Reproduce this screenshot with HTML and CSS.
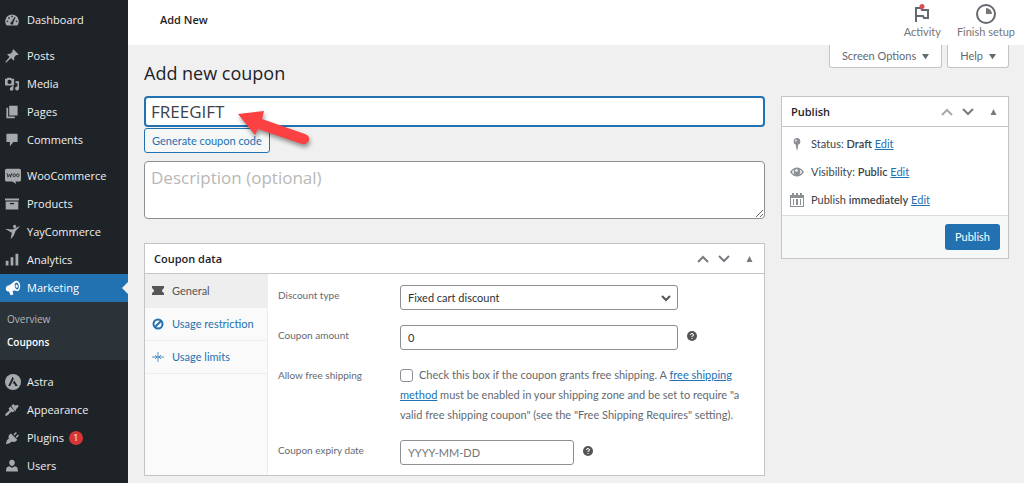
FILE: index.html
```html
<!DOCTYPE html>
<html lang="en">
<head>
<meta charset="utf-8">
<meta name="viewport" content="width=device-width, initial-scale=1">
<title>Add new coupon</title>
<link rel="stylesheet" href="styles.css">
</head>
<body>
<div class="admin">
  <nav class="sidebar" aria-label="Main menu">
    <ul class="menu">
      <li class="group"><a class="item" href="#"><svg class="icon" viewBox="0 0 20 20"><path fill-rule="evenodd" d="M2.500 18h15a9.700 9.700 0 1 0-15 0zM9 4h2v2H9zM4.500 6.200h2v2h-2zM2.500 11h2v2h-2zM15.500 11h2v2h-2zM14 5.500l1 .8-3.300 7.700a2 2 0 1 1-2.500-1.200z"/></svg>Dashboard</a></li>
      <li><a class="item" href="#"><svg class="icon" viewBox="0 0 20 20"><path d="M12 .5 19.500 8l-2 1-1.500-.3-3 3.300c.6 1.800.2 3.400-.8 4.600l-3.600-3.600L1.500 19.500l-1-1 6-7.500L3 7.800c1.400-1.200 3-1.400 4.500-1l3.300-2.900-.2-1.600z"/></svg>Posts</a></li>
      <li><a class="item" href="#"><svg class="icon" viewBox="0 0 20 20"><path fill-rule="evenodd" d="M0 2.500h2.500L3.500 1h5l1 1.500H13V12H0zM6.500 4a3 3 0 1 0 0 6 3 3 0 0 0 0-6zM15 6h5v10.500a2.800 2.800 0 1 1-2.200-2.800V9H15zM12 13v4a2.600 2.600 0 1 1-2.200-2.600V13z"/></svg>Media</a></li>
      <li><a class="item" href="#"><svg class="icon" viewBox="0 0 20 20"><path d="M6 1h12v14H6zM2 4h2.500v12.500H14V19H2z"/></svg>Pages</a></li>
      <li class="group"><a class="item" href="#"><svg class="icon" viewBox="0 0 20 20"><path d="M3 1h14q1 0 1 1v10q0 1-1 1h-5l-5 6v-6H3q-1 0-1-1V2q0-1 1-1z"/></svg>Comments</a></li>
      <li><a class="item" href="#"><svg class="icon icon-wide" viewBox="0 0 20 20"><path d="M2 1h16q2 0 2 2v12q0 2-2 2h-5l1 3-5-3H2q-2 0-2-2V3q0-2 2-2z"/><path class="cut-line" d="M2.500 6.500l1.200 5 2-4 1.300 4 1.500-5"/><circle class="cut-line" cx="11.500" cy="9" r="1.700"/><circle class="cut-line" cx="16" cy="9" r="1.700"/></svg>WooCommerce</a></li>
      <li><a class="item" href="#"><svg class="icon" viewBox="0 0 20 20"><path fill-rule="evenodd" d="M0 2h20v3H0zM1 6.500h18V18H1zM7 8.500v2h6v-2z"/></svg>Products</a></li>
      <li><a class="item" href="#"><svg class="icon icon-wide" viewBox="0 0 20 20"><circle cx="12" cy="3" r="2"/><path d="M0 6l9 1 10-4.500-6 6.500c-1 4-3 7.500-6 10l1.500-8z"/></svg>YayCommerce</a></li>
      <li><a class="item" href="#"><svg class="icon" viewBox="0 0 20 20"><path d="M1 11h4v7H1zM8 6h4v12H8zM15 1h4v17h-4z"/></svg>Analytics</a></li>
      <li class="group">
        <a class="item item-current" href="#"><svg class="icon icon-wide" viewBox="0 0 20 20"><path fill-rule="evenodd" d="M14 1c3 0 5 3 5 6.500S17.500 14 15.500 14c-1.500 0-3-.9-4.500-.7l-1.500.4 1 4.300-3.500 1-2-4.700C2.500 15 1 13 1 11s1-3.500 3-4c4-.8 6.500-5.500 10-6zM14.500 3c-1.500 0-2.500 2-2.500 4s1.500 5 3 5 2.300-2 2.300-4.300S16 3 14.500 3zM14 5.500c1.200 0 2 1 2 2.200s-.5 2-1.300 2-1.500-1-1.500-2.200.3-2 .8-2z"/></svg>Marketing</a>
        <ul class="submenu">
          <li><a class="subitem" href="#">Overview</a></li>
          <li><a class="subitem subitem-current" href="#">Coupons</a></li>
        </ul>
      </li>
      <li><a class="item" href="#"><svg class="icon icon-wide" viewBox="0 0 20 20"><circle cx="10" cy="10" r="10"/><path class="cut" d="M9.500 3.500 4 15h2.500l4.500-9zM11.500 8l-2 4h2l1.300 3H16z"/></svg>Astra</a></li>
      <li><a class="item" href="#"><svg class="icon" viewBox="0 0 20 20"><path d="M9 4l3-2.500 2 2L18.500 3l1 1.500-3.500 4.500-1.500 3zM8 5l5.500 6.500-2.500 2-1.500-1.500c-2 .5-4 4.500-6.500 6S-.5 17.500 1 15.500s5-4 5.500-5.500L5 8z"/></svg>Appearance</a></li>
      <li><a class="item" href="#"><svg class="icon" viewBox="0 0 20 20"><path d="M12 5l3.500-3.500 1.500 1.500L13.500 6.500zM15 8.500 18.500 5 20 6.500 16.500 10zM8.500 3.500l9 9c-2 3-5.500 4-8 2.500L7 17c-2 1.500-3 0-5 2l-1-1c2-2 .5-3 2-5l2.500-2c-1.500-3 0-6 3-7.500z"/></svg>Plugins <span class="badge">1</span></a></li>
      <li><a class="item" href="#"><svg class="icon" viewBox="0 0 20 20"><path d="M10 1c2.500 0 4 2 4 4.200S12 10 10 10 6 7.500 6 5.200 7.500 1 10 1zM6 10.500l4 2 4-2c3 .5 4.500 2 4.500 7.500h-17c0-5.500 1.500-7 4.500-7.500z"/></svg>Users</a></li>
    </ul>
  </nav>

  <div class="page">
    <header class="topbar">
      <span class="topbar-title">Add New</span>
      <div class="topbar-actions">
        <button class="top-button" type="button"><svg class="top-icon" viewBox="0 0 20 20"><path class="flag" d="M4 18V4h5l1 2h6v8h-4l-1-2H4"/><circle class="dot" cx="10" cy="2.500" r="2.500"/></svg>Activity</button>
        <button class="top-button" type="button"><svg class="top-icon" viewBox="0 0 20 20"><circle class="ring" cx="10" cy="10" r="9"/><path class="slice" d="M10 4a6 6 0 0 1 6 6h-6z"/></svg>Finish setup</button>
      </div>
    </header>

    <main class="content">
      <div class="screen-tabs">
        <button class="screen-tab" type="button">Screen Options <svg class="caret" viewBox="0 0 8 8"><path d="M0 1h8L4 7z"/></svg></button>
        <button class="screen-tab" type="button">Help <svg class="caret" viewBox="0 0 8 8"><path d="M0 1h8L4 7z"/></svg></button>
      </div>
      <h1 class="heading">Add new coupon</h1>

      <div class="columns">
        <div class="primary">
          <div class="code-field">
            <input class="code-input" type="text" value="FREEGIFT" aria-label="Coupon code">
            <svg class="pointer" viewBox="0 0 76 38"><path d="M1 4 27 1 25 9 68 24Q73 26 72 30 70 35 65 34L21 19 18 25z"/></svg>
          </div>
          <button class="generate" type="button">Generate coupon code</button>
          <textarea class="description" placeholder="Description (optional)" aria-label="Description"></textarea>

          <section class="box">
            <div class="box-head">
              <h2 class="box-title">Coupon data</h2>
              <div class="box-tools">
                <button class="tool" type="button" aria-label="Move up"><svg class="chevron" viewBox="0 0 12 12"><path d="M1 9l5-5 5 5"/></svg></button>
                <button class="tool" type="button" aria-label="Move down"><svg class="chevron" viewBox="0 0 12 12"><path d="M1 3l5 5 5-5"/></svg></button>
                <button class="tool" type="button" aria-label="Toggle panel"><svg class="triangle" viewBox="0 0 6 6"><path d="M0 6h6L3 0z"/></svg></button>
              </div>
            </div>
            <div class="data">
              <div class="tabs">
                <a class="tab tab-current" href="#"><svg class="tab-icon" viewBox="0 0 12 12"><path class="solid" d="M0 1h12v2Q8 6 12 8v2H0V8Q4 6 0 3z"/></svg>General</a>
                <a class="tab" href="#"><svg class="tab-icon" viewBox="0 0 12 12"><circle class="bold" cx="6" cy="6" r="4.500"/><path class="bold" d="M3 9l6-6"/></svg>Usage restriction</a>
                <a class="tab" href="#"><svg class="tab-icon" viewBox="0 0 12 12"><path class="fine" d="M6 1v10M0 6h12M3 4l2 2-2 2M9 4 7 6l2 2"/></svg>Usage limits</a>
              </div>
              <div class="fields">
                <div class="field">
                  <label class="label" for="type">Discount type</label>
                  <div class="select-wrap">
                    <select class="control" id="type"><option>Fixed cart discount</option></select>
                    <svg class="select-arrow" viewBox="0 0 10 10"><path d="M1 3l4 4 4-4"/></svg>
                  </div>
                </div>
                <div class="field">
                  <label class="label" for="amount">Coupon amount</label>
                  <input class="control" id="amount" type="text" value="0">
                  <svg class="help" viewBox="0 0 10 10"><circle cx="5" cy="5" r="5"/><path d="M3.500 4q0-1.500 1.500-1.500T6.500 4Q6.500 5 5 5.200V6M5 7v1"/></svg>
                </div>
                <div class="field">
                  <label class="label" for="shipping">Allow free shipping</label>
                  <p class="note"><input class="checkbox" id="shipping" type="checkbox">Check this box if the coupon grants free shipping. A <a class="link" href="#">free shipping method</a> must be enabled in your shipping zone and be set to require "a valid free shipping coupon" (see the "Free Shipping Requires" setting).</p>
                </div>
                <div class="field">
                  <label class="label" for="expiry">Coupon expiry date</label>
                  <input class="control control-short" id="expiry" type="text" placeholder="YYYY-MM-DD">
                  <svg class="help" viewBox="0 0 10 10"><circle cx="5" cy="5" r="5"/><path d="M3.500 4q0-1.500 1.500-1.500T6.500 4Q6.500 5 5 5.200V6M5 7v1"/></svg>
                </div>
              </div>
            </div>
          </section>
        </div>

        <aside class="box publish">
          <div class="box-head">
            <h2 class="box-title">Publish</h2>
            <div class="box-tools">
              <button class="tool tool-dim" type="button" aria-label="Move up"><svg class="chevron" viewBox="0 0 12 12"><path d="M1 9l5-5 5 5"/></svg></button>
              <button class="tool" type="button" aria-label="Move down"><svg class="chevron" viewBox="0 0 12 12"><path d="M1 3l5 5 5-5"/></svg></button>
              <button class="tool" type="button" aria-label="Toggle panel"><svg class="triangle" viewBox="0 0 6 6"><path d="M0 6h6L3 0z"/></svg></button>
            </div>
          </div>
          <ul class="status">
            <li class="status-row"><svg class="status-icon" viewBox="0 0 14 14"><path fill-rule="evenodd" d="M7 1a3.500 3.500 0 0 1 1 6.800V10l-1 4-1-4V7.800A3.500 3.500 0 0 1 7 1zM6 2.500 5 4l1 .8 1-1.500z"/></svg><span>Status: <b>Draft</b> <a class="link" href="#">Edit</a></span></li>
            <li class="status-row"><svg class="status-icon" viewBox="0 0 14 14"><path fill-rule="evenodd" d="M0 7q3-4.500 7-4.500T14 7q-3 4.500-7 4.500T0 7zM1.800 7q1 1.800 3.200 2.700A4 4 0 0 1 4.500 4.500Q3 5.300 1.800 7zM12.200 7Q11 5.300 9.500 4.500A4 4 0 0 1 9 9.700Q11.200 8.800 12.200 7zM6.500 4.200a1.300 1.300 0 1 0 0 2.600 1.300 1.300 0 0 0 0-2.600z"/></svg><span>Visibility: <b>Public</b> <a class="link" href="#">Edit</a></span></li>
            <li class="status-row"><svg class="status-icon" viewBox="0 0 14 14"><path fill-rule="evenodd" d="M0 2h2V0h2v2h2V0h2v2h2V0h2v2h2v12H0zM1 5v8h12V5zM3 6h1v6H3zM6 6h2v6H6zM10 6h1v6h-1z"/></svg><span>Publish <b>immediately</b> <a class="link" href="#">Edit</a></span></li>
          </ul>
          <div class="publish-foot"><button class="primary-button" type="button">Publish</button></div>
        </aside>
      </div>
    </main>
  </div>
</div>
</body>
</html>
```

FILE: styles.css
```css
* { box-sizing: border-box; }

body {
  margin: 0;
  background: #f0f0f1;
  color: #3c434a;
  font: 11px/16px Lato, "Open Sans", sans-serif;
}

button, input, select, textarea { font: inherit; color: inherit; margin: 0; }
button { cursor: pointer; white-space: nowrap; }
ul { list-style: none; margin: 0; padding: 0; }
h1, h2, p { margin: 0; }
b { font-weight: 600; }
a { text-decoration: none; }
.link { color: #2271b1; text-decoration: underline; }

.admin { display: flex; min-height: 100vh; }

/* Sidebar */
.sidebar {
  flex: 0 0 128px;
  background: #1d2327;
  font-family: "Open Sans", sans-serif;
}
.menu { padding-top: 6px; }
.group { margin-bottom: 8px; }
.item {
  display: flex;
  align-items: center;
  height: 28px;
  padding-left: 5px;
  color: #f0f0f1;
}
.icon { width: 14px; height: 14px; margin-right: 8px; fill: #a7aaad; }
.icon-wide { width: 16px; height: 16px; margin-right: 6px; }
.cut { fill: #1d2327; }
.cut-line { fill: none; stroke: #1d2327; stroke-width: 1; }
.item-current { position: relative; background: #2271b1; color: #fff; }
.item-current .icon { fill: #fff; }
.item-current::after {
  content: "";
  position: absolute;
  right: 0;
  top: 8px;
  border: 6px solid transparent;
  border-left-width: 0;
  border-right-color: #f0f0f1;
}
.submenu { padding: 5px 0 7px; background: #2c3338; font-size: 10px; }
.subitem { display: block; padding: 4px 7px 3px; color: #b4b7ba; }
.subitem-current { color: #fff; font-weight: 600; }
.badge {
  min-width: 14px;
  margin-left: 5px;
  border-radius: 7px;
  background: #d63638;
  color: #fff;
  font-size: 9px;
  line-height: 14px;
  text-align: center;
}

/* Top bar */
.page { flex: 1; min-width: 0; }
.topbar {
  display: flex;
  justify-content: space-between;
  height: 45px;
  padding: 0 4px 0 32px;
  background: #fff;
}
.topbar-title {
  color: #1e1e1e;
  font: 600 11px/40px "Open Sans", sans-serif;
}
.topbar-actions { display: flex; gap: 6px; }
.top-button {
  display: flex;
  flex-direction: column;
  align-items: center;
  padding: 4px 5px 0;
  border: 0;
  background: none;
  color: #757575;
}
.top-icon { width: 20px; height: 20px; }
.flag, .ring { fill: none; stroke: #646970; stroke-width: 2; }
.dot { fill: #d94f4f; }
.slice { fill: #757575; }

/* Content */
.content { padding: 0 15px 8px 16px; }
.screen-tabs { display: flex; justify-content: flex-end; gap: 5px; }
.screen-tab {
  display: flex;
  align-items: center;
  gap: 6px;
  height: 23px;
  padding: 0 12px;
  border: 1px solid #c3c4c7;
  border-top: 0;
  border-radius: 0 0 3px 3px;
  background: #fff;
  color: #646970;
}
.caret { width: 7px; height: 7px; fill: #646970; }
.heading {
  margin: -6px 0 12px;
  color: #1d2327;
  font: 18px/22px "Open Sans", sans-serif;
}
.columns { display: flex; align-items: flex-start; gap: 16px; }
.primary { flex: 1; min-width: 0; }
.code-field { position: relative; }
.code-input {
  display: block;
  width: 100%;
  height: 31px;
  padding: 0 5px;
  border: 2px solid #2271b1;
  border-radius: 4px;
  outline: 0;
  background: #fff;
  font-family: "Open Sans", sans-serif;
  font-size: 17px;
}
.pointer {
  position: absolute;
  left: 93px;
  top: 14px;
  width: 76px;
  height: 38px;
  fill: #fb4141;
  filter: drop-shadow(1px 3px 2px #0006);
  overflow: visible;
  pointer-events: none;
}
.generate {
  display: block;
  height: 25px;
  margin: 1px 0 8px;
  padding: 0 7px;
  border: 1px solid #2271b1;
  border-radius: 3px;
  background: #f6f7f7;
  color: #2271b1;
}
.description {
  display: block;
  width: 100%;
  height: 58px;
  margin-bottom: 24px;
  padding: 3px 6px;
  border: 1px solid #8c8f94;
  border-radius: 4px;
  background: #fff;
  font: 17px/26px "Open Sans", sans-serif;
}
.description::placeholder { color: #b8b8b8; }

/* Boxes */
.box { border: 1px solid #c3c4c7; background: #fff; }
.box-head {
  display: flex;
  align-items: center;
  justify-content: space-between;
  height: 30px;
  padding: 0 6px 0 9px;
  border-bottom: 1px solid #c3c4c7;
}
.box-title {
  color: #1d2327;
  font: 600 11px/16px "Open Sans", sans-serif;
}
.box-tools { display: flex; gap: 3px; color: #787c82; }
.tool {
  display: grid;
  place-items: center;
  width: 18px;
  height: 20px;
  padding: 0;
  border: 0;
  background: none;
}
.tool:last-child { margin-left: 4px; }
.tool-dim { color: #a7aaad; }
.chevron { width: 12px; height: 12px; fill: none; stroke: currentColor; stroke-width: 2; }
.triangle { width: 7px; height: 6px; fill: currentColor; }

.data { display: flex; background: #fff; }
.tabs { flex: 0 0 123px; border-right: 1px solid #eee; background: #fafafa; }
.tab {
  display: flex;
  align-items: center;
  gap: 8px;
  height: 33px;
  padding-left: 7px;
  border-bottom: 1px solid #eee;
  color: #2271b1;
}
.tab-current { height: 34px; background: #eee; color: #555; }
.tab-icon { width: 12px; height: 12px; }
.solid { fill: currentColor; }
.bold { fill: none; stroke: currentColor; stroke-width: 2; }
.fine { fill: none; stroke: currentColor; stroke-width: 1; opacity: .75; }

.fields {
  display: flex;
  flex: 1;
  flex-direction: column;
  gap: 15px;
  min-width: 0;
  padding: 11px 24px 10px 10px;
}
.field { display: flex; align-items: flex-start; }
.label { flex: 0 0 122px; padding-top: 2px; color: #646970; font-size: 10px; }
.select-wrap { position: relative; flex: 0 1 278px; display: flex; }
.select-arrow {
  position: absolute;
  right: 7px;
  top: 8px;
  width: 10px;
  height: 10px;
  fill: none;
  stroke: #555;
  stroke-width: 2;
  pointer-events: none;
}
.control {
  flex: 0 1 278px;
  width: 100%;
  min-width: 0;
  height: 25px;
  padding: 0 7px;
  border: 1px solid #8c8f94;
  border-radius: 3px;
  background: #fff;
  color: #2c3338;
  appearance: none;
}
select.control { padding: 0 3px; }
.control-short { flex-basis: 174px; }
.control::placeholder { color: #757575; }
.help { flex: none; width: 10px; height: 10px; margin: 6px 0 0 9px; fill: #555; }
.help path { fill: none; stroke: #fff; stroke-width: 1; }
.note { flex: 1; color: #646970; line-height: 20px; }
.checkbox {
  width: 13px;
  height: 13px;
  margin-right: 6px;
  border: 1px solid #8c8f94;
  border-radius: 3px;
  background: #fff;
  vertical-align: -3px;
  appearance: none;
}
select.control { padding: 0 7px; }

/* Publish */
.publish { flex: 0 0 228px; }
.status { padding: 3px 0 1px; }
.status-row {
  display: flex;
  align-items: center;
  gap: 7px;
  height: 28px;
  padding-left: 8px;
}
.status-icon { width: 14px; height: 14px; fill: #8c8f94; }
.publish-foot {
  display: flex;
  justify-content: flex-end;
  padding: 8px;
  border-top: 1px solid #dcdcde;
  background: #f6f7f7;
}
.primary-button {
  height: 26px;
  padding: 0 10px;
  border: 0;
  border-radius: 3px;
  background: #2271b1;
  color: #fff;
}
```
